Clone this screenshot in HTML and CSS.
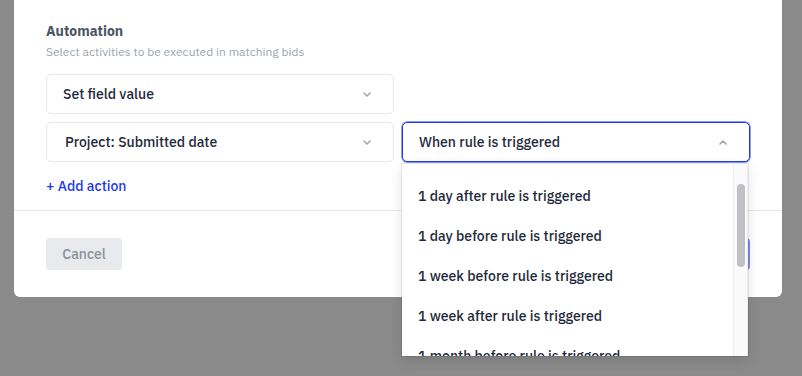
FILE: index.html
```html
<!DOCTYPE html>
<html>
<head>
<meta charset="utf-8">
<link rel="stylesheet" href="styles.css">
</head>
<body>
<div class="modal">
  <div class="body">
    <div class="title">Automation</div>
    <div class="subtitle">Select activities to be executed in matching bids</div>
    <div class="grid">
      <div class="select">
        <span>Set field value</span>
        <svg class="chev" width="8" height="5" viewBox="0 0 8 5"><path d="M1 1l3 3 3-3" fill="none" stroke="#9ca3af" stroke-width="1.5" stroke-linecap="round" stroke-linejoin="round"/></svg>
      </div>
      <div></div>
      <div class="select">
        <span class="proj">Project: Submitted date</span>
        <svg class="chev" width="8" height="5" viewBox="0 0 8 5"><path d="M1 1l3 3 3-3" fill="none" stroke="#9ca3af" stroke-width="1.5" stroke-linecap="round" stroke-linejoin="round"/></svg>
      </div>
      <div class="anchor">
        <div class="select focus">
          <span>When rule is triggered</span>
          <svg class="chev" width="8" height="5" viewBox="0 0 8 5"><path d="M1 4l3-3 3 3" fill="none" stroke="#9ca3af" stroke-width="1.5" stroke-linecap="round" stroke-linejoin="round"/></svg>
        </div>
        <div class="menu">
          <div class="item">1 day after rule is triggered</div>
          <div class="item">1 day before rule is triggered</div>
          <div class="item">1 week before rule is triggered</div>
          <div class="item">1 week after rule is triggered</div>
          <div class="item">1 month before rule is triggered</div>
          <div class="track"><div class="thumb"></div></div>
        </div>
      </div>
    </div>
    <div class="add">+ Add action</div>
  </div>
  <div class="footer">
    <button class="cancel">Cancel</button>
    <button class="save">Save</button>
  </div>
</div>
</body>
</html>
```

FILE: styles.css
```css
* { box-sizing: border-box; }
html, body { margin: 0; padding: 0; }
body {
  background: #8a8a8a;
  font-family: "IBM Plex Sans", Roboto, "Noto Sans", sans-serif;
  height: 376px;
  overflow: hidden;
}
.modal {
  margin-left: 14px;
  width: 768px;
  background: #fff;
  border-radius: 0 0 6px 6px;
}
.body {
  padding: 21px 32px 14px 32px;
  border-bottom: 1px solid #e5e7eb;
}
.title {
  font-size: 14px;
  line-height: 20px;
  font-weight: 700;
  color: #4b5563;
}
.subtitle {
  margin-top: 3px;
  font-size: 12px;
  line-height: 16px;
  color: #9ca3af;
}
.grid {
  margin-top: 14px;
  display: grid;
  grid-template-columns: 1fr 1fr;
  gap: 8px;
}
.select {
  height: 40px;
  border: 1px solid #e5e7eb;
  border-radius: 5px;
  display: flex;
  align-items: center;
  justify-content: space-between;
  padding: 0 22px 0 16px;
  font-size: 14px;
  font-weight: 500;
  color: #1e293b;
}
.proj { margin-left: 2px; }
.select.focus {
  border-color: #1f3ae6;
  box-shadow: 0 0 0 0.5px #1f3ae6;
}
.anchor { position: relative; }
.menu {
  position: absolute;
  left: 0;
  top: 42px;
  width: 346px;
  height: 192px;
  background: #fff;
  overflow: hidden;
  padding: 12px 0 0 0;
  box-shadow: 0 0 0 1px rgba(0,0,0,0.07), 0 4px 12px rgba(0,0,0,0.12);
  z-index: 5;
}
.item {
  height: 40px;
  display: flex;
  align-items: center;
  padding-left: 16px;
  font-size: 14px;
  font-weight: 500;
  color: #1e293b;
}
.track {
  position: absolute;
  top: 0;
  right: 0;
  width: 15px;
  height: 100%;
  background: #fafafa;
  border-left: 1px solid #efefef;
  border-right: 1px solid #ececec;
}
.thumb {
  position: absolute;
  left: 3px;
  top: 20px;
  width: 8px;
  height: 83px;
  border-radius: 4px;
  background: #c1c1c5;
}
.add {
  margin-top: 14px;
  font-size: 14px;
  line-height: 20px;
  font-weight: 500;
  color: #1d3ae8;
}
.footer {
  display: flex;
  justify-content: space-between;
  padding: 27px 32px 27px 32px;
}
button {
  font-family: inherit;
  height: 32px;
  border: none;
  border-radius: 4px;
  font-size: 14px;
  font-weight: 500;
  padding: 0 16px;
}
.cancel {
  background: #e9eaed;
  color: #8a919c;
  width: 76px;
}
.save {
  background: #7c8af7;
  color: #fff;
  width: 80px;
}
```
